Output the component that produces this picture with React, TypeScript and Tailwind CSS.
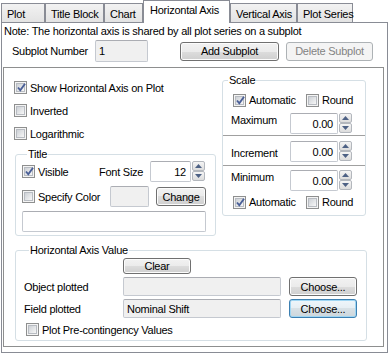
import React from 'react';

const font =
  'font-["Liberation_Sans",Arial,sans-serif] text-[11px] leading-[14px] tracking-[-0.25px] text-black whitespace-nowrap';

const Check = ({ checked }: { checked?: boolean }) => (
  <span className="flex h-[13px] w-[13px] shrink-0 items-center justify-center border border-[#8e8f8f] bg-[#f4f4f4]">
    <span className="relative flex h-[9px] w-[9px] items-center justify-center border border-[#b8bcc2] bg-gradient-to-br from-[#cdd1d6] to-[#f7f7f7]">
      {checked && (
        <svg width="11" height="11" viewBox="0 0 11 11" className="absolute -top-[2px] -left-[1px]">
          <path d="M2 5.5 L4.3 8.3 L9 1.8" fill="none" stroke="#4a5f97" strokeWidth="1.9" />
        </svg>
      )}
    </span>
  </span>
);

const CheckRow = ({ checked, label, className = '' }: { checked?: boolean; label: string; className?: string }) => (
  <label className={`flex items-center gap-[3px] ${className}`}>
    <Check checked={checked} />
    <span>{label}</span>
  </label>
);

const Button = ({
  label,
  className = '',
  disabled,
  focused,
}: {
  label: string;
  className?: string;
  disabled?: boolean;
  focused?: boolean;
}) => (
  <button
    className={`flex items-center justify-center rounded-[3px] border ${
      disabled
        ? 'border-[#adb2b5] bg-[#f4f4f4] text-[#838383]'
        : focused
          ? 'border-[#3c7fb1] bg-[linear-gradient(#eef6fb_0%,#e6eef3_50%,#d8e1e6_50%,#cdd6db_100%)] shadow-[inset_0_0_0_1px_#9fd6f3]'
          : 'border-[#707070] bg-[linear-gradient(#f2f2f2_0%,#ebebeb_50%,#dddddd_50%,#cfcfcf_100%)] shadow-[inset_0_0_0_1px_#fcfcfc]'
    } ${className}`}
  >
    {label}
  </button>
);

const SpinBtn = ({ up }: { up?: boolean }) => (
  <span className="flex h-[10px] w-[13px] items-center justify-center rounded-[2px] border border-[#b3b7bd] bg-[linear-gradient(#f5f5f5,#dcdcdc)]">
    <svg width="7" height="4" viewBox="0 0 7 4">
      {up ? <polygon points="0,4 3.5,0 7,4" fill="#4d6185" /> : <polygon points="0,0 3.5,4 7,0" fill="#4d6185" />}
    </svg>
  </span>
);

const Spin = ({ value, inputW }: { value: string; inputW: string }) => (
  <div className="flex items-start gap-[1px]">
    <div
      className={`flex h-[21px] ${inputW} items-center justify-end rounded-[2px] border border-[#c5c9d0] border-t-[#abadb3] bg-white pr-[4px]`}
    >
      {value}
    </div>
    <div className="flex flex-col">
      <SpinBtn up />
      <SpinBtn />
    </div>
  </div>
);

const Field = ({ value = '', className = '', white }: { value?: string; className?: string; white?: boolean }) => (
  <div
    className={`flex items-center rounded-[2px] border border-[#c5c9d0] border-t-[#abadb3] px-[3px] ${
      white ? 'bg-white' : 'bg-[#f0f0f0]'
    } ${className}`}
  >
    {value}
  </div>
);

const Legend = ({ children }: { children: React.ReactNode }) => (
  <legend className="ml-[5px] px-[1px] leading-[14px]">{children}</legend>
);

const tabs = [
  { label: 'Plot', w: 'w-[44px]' },
  { label: 'Title Block', w: 'w-[59px]' },
  { label: 'Chart', w: 'w-[39px]' },
  { label: 'Horizontal Axis', w: 'w-[87px]', active: true },
  { label: 'Vertical Axis', w: 'w-[67px]' },
  { label: 'Plot Series', w: 'w-[56px]' },
];

export default function App() {
  return (
    <div className={`h-[356px] w-[389px] overflow-hidden bg-white ${font}`}>
      {/* tab strip */}
      <div className="flex h-[22px] items-end pl-[1px]">
        {tabs.map((t) =>
          t.active ? (
            <div
              key={t.label}
              className={`relative z-10 -mb-px h-[23px] ${t.w} border border-b-0 border-[#898c95] bg-white pt-[2px] pl-[6px]`}
            >
              {t.label}
            </div>
          ) : (
            <div
              key={t.label}
              className={`h-[19px] ${t.w} border border-b-0 border-[#898c95] bg-[linear-gradient(#f2f2f2,#e3e3e3)] pt-[3px] pl-[5px]`}
            >
              {t.label}
            </div>
          ),
        )}
      </div>

      {/* tab page */}
      <div className="ml-[1px] h-[331px] w-[387px] border border-[#898c95] bg-white">
        <div className="pt-[1px] pl-[2px]">Note: The horizontal axis is shared by all plot series on a subplot</div>

        <div className="mt-[2px] flex h-[22px] items-center">
          <span className="ml-[10px] w-[83px]">Subplot Number</span>
          <Field value="1" className="h-[22px] w-[53px]" />
          <Button label="Add Subplot" className="ml-[32px] h-[19px] w-[99px]" />
          <Button label="Delete Subplot" disabled className="ml-[7px] h-[19px] w-[87px]" />
        </div>

        {/* inner page */}
        <div className="mt-[5px] ml-[1px] h-[280px] w-[381px] border border-[#8e8f8f] pl-[10px]">
          <div className="flex items-start pt-[5px]">
            {/* left column */}
            <div className="w-[202px] pt-[3px]">
              <CheckRow checked label="Show Horizontal Axis on Plot" className="h-[23px]" />
              <CheckRow label="Inverted" className="h-[23px]" />
              <CheckRow label="Logarithmic" className="h-[23px]" />

              <fieldset className="mt-[2px] ml-[1px] h-[89px] w-[201px] rounded-[3px] border border-[#d5dfe5] pr-[9px] pl-[6px]">
                <Legend>Title</Legend>
                <div className="flex h-[21px] items-center">
                  <CheckRow checked label="Visible" className="w-[77px]" />
                  <span className="w-[51px]">Font Size</span>
                  <Spin value="12" inputW="w-[41px]" />
                </div>
                <div className="mt-[4px] flex h-[21px] items-center">
                  <CheckRow label="Specify Color" className="w-[88px]" />
                  <Field className="h-[21px] w-[39px]" />
                  <Button label="Change" className="ml-[7px] h-[19px] w-[50px]" />
                </div>
                <Field white className="mt-[4px] h-[21px] w-[184px]" />
              </fieldset>
            </div>

            {/* scale */}
            <fieldset className="ml-[6px] h-[143px] w-[144px] rounded-[3px] border border-[#d5dfe5]">
              <Legend>Scale</Legend>
              <div className="mt-[4px] flex h-[18px] items-center pl-[10px]">
                <CheckRow checked label="Automatic" className="w-[73px]" />
                <CheckRow label="Round" />
              </div>
              <div className="mt-[4px] flex h-[21px] items-center pl-[8px]">
                <span className="w-[59px] self-start">Maximum</span>
                <Spin value="0.00" inputW="w-[48px]" />
              </div>
              <div className="mt-px border-t border-[#a0a0a0]" />
              <div className="mt-[5px] flex h-[21px] items-center pl-[8px]">
                <span className="w-[59px] pt-[3px]">Increment</span>
                <Spin value="0.00" inputW="w-[48px]" />
              </div>
              <div className="mt-[3px] border-t border-[#a0a0a0]" />
              <div className="mt-[4px] flex h-[21px] items-center pl-[8px]">
                <span className="w-[59px] self-start">Minimum</span>
                <Spin value="0.00" inputW="w-[48px]" />
              </div>
              <div className="mt-[2px] flex h-[18px] items-center pl-[10px]">
                <CheckRow checked label="Automatic" className="w-[73px]" />
                <CheckRow label="Round" />
              </div>
            </fieldset>
          </div>

          {/* horizontal axis value */}
          <fieldset className="mt-[7px] ml-[1px] h-[98px] w-[352px] rounded-[3px] border border-[#d5dfe5] pl-[8px]">
            <Legend>Horizontal Axis Value</Legend>
            <Button label="Clear" className="mt-[1px] ml-[99px] h-[16px] w-[68px]" />
            <div className="mt-[3px] flex h-[19px] items-center">
              <span className="w-[99px]">Object plotted</span>
              <Field className="h-[19px] w-[158px]" />
              <Button label="Choose..." className="ml-[8px] h-[19px] w-[68px]" />
            </div>
            <div className="mt-[3px] flex h-[19px] items-center">
              <span className="w-[99px]">Field plotted</span>
              <Field value="Nominal Shift" className="h-[19px] w-[158px]" />
              <Button label="Choose..." focused className="ml-[8px] h-[19px] w-[68px]" />
            </div>
            <CheckRow label="Plot Pre-contingency Values" className="mt-[4px] ml-[2px] h-[15px]" />
          </fieldset>
        </div>
      </div>
    </div>
  );
}
